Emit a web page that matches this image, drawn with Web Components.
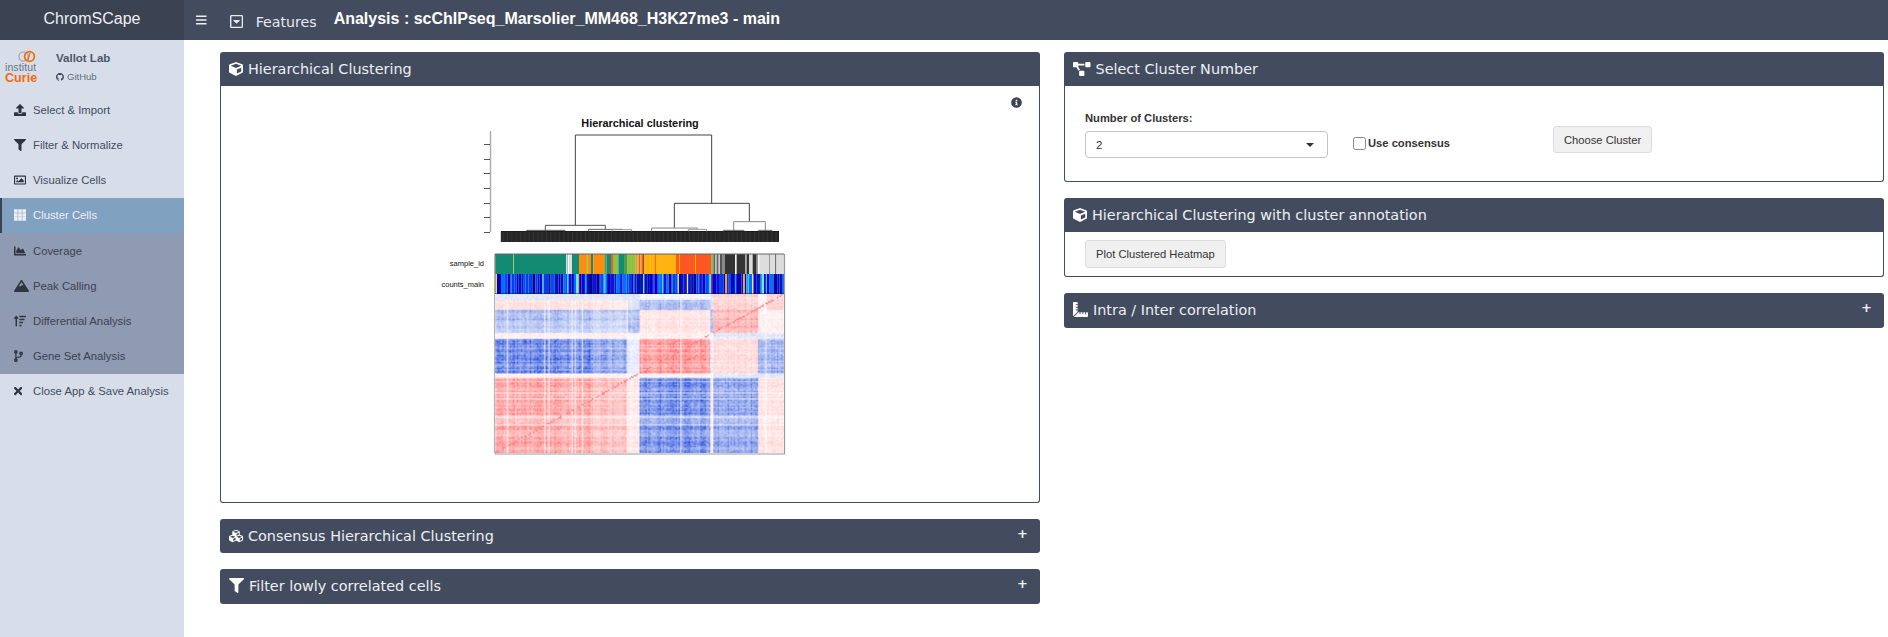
<!DOCTYPE html>
<html lang="en">
<head>
<meta charset="utf-8">
<title>ChromSCape</title>
<style>
  html, body { margin: 0; height: 100%; overflow: hidden; background: #fff; }
  body { font-family: "Liberation Sans", Arial, sans-serif; }
</style>
</head>
<body>
<chrom-app></chrom-app>
<script>
const ICONS = {
  cube: ["0 0 512 512", "M239.1 6.3l-208 78c-18.7 7-31.1 25-31.1 45v225.1c0 18.2 10.3 34.8 26.5 42.9l208 104c13.5 6.8 29.4 6.8 42.9 0l208-104c16.3-8.1 26.5-24.8 26.5-42.9V129.3c0-20-12.4-37.9-31.1-44.9l-208-78C262 2.2 250 2.2 239.1 6.3zM256 68.4l192 72v1.1l-192 78-192-78v-1.1l192-72zm32 356V275.5l160-65v133.9l-160 80z"],
  filter: ["0 0 512 512", "M487.976 0H24.028C2.71 0-8.047 25.866 7.058 40.971L192 225.941V432c0 7.831 3.821 15.17 10.237 19.662l80 55.98C298.02 518.69 320 507.493 320 487.98V225.941l184.947-184.97C520.021 25.896 509.338 0 487.976 0z"],
  upload: ["0 0 512 512", "M296 384h-80c-13.3 0-24-10.7-24-24V192h-87.7c-17.8 0-26.7-21.5-14.1-34.1L242.3 5.7c7.5-7.5 19.8-7.5 27.3 0l152.2 152.2c12.6 12.6 3.7 34.1-14.1 34.1H320v168c0 13.3-10.7 24-24 24zm216-8v112c0 13.3-10.7 24-24 24H24c-13.3 0-24-10.7-24-24V376c0-13.3 10.7-24 24-24h136v8c0 30.9 25.1 56 56 56h80c30.9 0 56-25.1 56-56v-8h136c13.3 0 24 10.7 24 24z"],
  image: ["0 0 512 512", "M464 64H48C21.49 64 0 85.49 0 112v288c0 26.51 21.49 48 48 48h416c26.51 0 48-21.49 48-48V112c0-26.51-21.49-48-48-48zm-6 336H54a6 6 0 0 1-6-6V118a6 6 0 0 1 6-6h404a6 6 0 0 1 6 6v276a6 6 0 0 1-6 6zM128 152c-22.091 0-40 17.909-40 40s17.909 40 40 40 40-17.909 40-40-17.909-40-40-40zM96 352h320v-80l-87.515-87.515c-4.686-4.686-12.284-4.686-16.971 0L192 304l-39.515-39.515c-4.686-4.686-12.284-4.686-16.971 0L96 304v48z"],
  th: ["0 0 512 512", "M0 10h155v155H0zM178 10h155v155H178zM356 10h156v155H356zM0 178h155v155H0zM178 178h155v155H178zM356 178h156v155H356zM0 346h155v156H0zM178 346h155v156H178zM356 346h156v156H356z"],
  area: ["0 0 512 512", "M500 384c6.6 0 12 5.4 12 12v40c0 6.6-5.4 12-12 12H12c-6.6 0-12-5.4-12-12V76c0-6.6 5.4-12 12-12h40c6.6 0 12 5.4 12 12v308h436zM372.7 159.5L288 216l-85.3-113.7c-5.1-6.8-15.5-6.3-19.9 1L96 248v104h384l-89.9-187.8c-3.2-6.5-11.4-8.7-17.4-4.7z"],
  mountain: ["0 0 640 512", "M634.92 462.7l-288-448C341.03 5.54 330.89 0 320 0s-21.03 5.54-26.92 14.7l-288 448a32.001 32.001 0 0 0-1.17 32.64A32.004 32.004 0 0 0 32 512h576c11.71 0 22.48-6.39 28.09-16.67a31.983 31.983 0 0 0-1.17-32.63zM320 91.18L405.39 224H320l-64 64-38.06-38.06L320 91.18z"],
  sort: ["0 0 512 512", "M304 416h-64a16 16 0 0 0-16 16v32a16 16 0 0 0 16 16h64a16 16 0 0 0 16-16v-32a16 16 0 0 0-16-16zM16 160h48v304a16 16 0 0 0 16 16h32a16 16 0 0 0 16-16V160h48c14.21 0 21.38-17.24 11.31-27.31l-80-96a16 16 0 0 0-22.62 0l-80 96C-5.35 142.74 1.77 160 16 160zm416 0H240a16 16 0 0 0-16 16v32a16 16 0 0 0 16 16h192a16 16 0 0 0 16-16v-32a16 16 0 0 0-16-16zm-64 128H240a16 16 0 0 0-16 16v32a16 16 0 0 0 16 16h128a16 16 0 0 0 16-16v-32a16 16 0 0 0-16-16zM496 32H240a16 16 0 0 0-16 16v32a16 16 0 0 0 16 16h256a16 16 0 0 0 16-16V48a16 16 0 0 0-16-16z"],
  branch: ["0 0 384 512", "M384 144c0-44.2-35.8-80-80-80s-80 35.8-80 80c0 36.4 24.3 67.1 57.5 76.8-.6 16.1-4.2 28.5-11 36.9-15.4 19.2-49.3 22.4-85.2 25.7-28.2 2.6-57.4 5.4-81.3 16.9v-144c32.5-10.2 56-40.5 56-76.3 0-44.2-35.8-80-80-80S0 35.8 0 80c0 35.8 23.5 66.1 56 76.3v199.3C23.5 365.9 0 396.2 0 432c0 44.2 35.8 80 80 80s80-35.8 80-80c0-34-21.2-63.1-51.2-74.6 3.1-5.2 7.8-9.8 14.9-13.4 16.2-8.2 40.4-10.4 66.1-12.8 42.2-3.9 90-8.4 118.2-43.4 14-17.4 21.1-39.8 21.6-67.9 31.6-10.8 54.4-40.7 54.4-75.9zM80 64c8.8 0 16 7.2 16 16s-7.2 16-16 16-16-7.2-16-16 7.2-16 16-16zm0 384c-8.8 0-16-7.2-16-16s7.2-16 16-16 16 7.2 16 16-7.2 16-16 16zm224-320c8.8 0 16 7.2 16 16s-7.2 16-16 16-16-7.2-16-16 7.2-16 16-16z"],
  times: ["0 0 352 512", "M242.72 256l100.07-100.07c12.28-12.28 12.28-32.19 0-44.48l-22.24-22.24c-12.28-12.28-32.19-12.28-44.48 0L176 189.28 75.93 89.21c-12.28-12.28-32.19-12.28-44.48 0L9.21 111.45c-12.28 12.28-12.28 32.19 0 44.48L109.28 256 9.21 356.07c-12.28 12.28-12.28 32.19 0 44.48l22.24 22.24c12.28 12.28 32.2 12.28 44.48 0L176 322.72l100.07 100.07c12.28 12.28 32.2 12.28 44.48 0l22.24-22.24c12.28-12.28 12.28-32.19 0-44.48L242.72 256z"],
  github: ["0 0 16 16", "M8 0C3.58 0 0 3.58 0 8c0 3.54 2.29 6.53 5.47 7.59.4.07.55-.17.55-.38 0-.19-.01-.82-.01-1.49-2.01.37-2.53-.49-2.69-.94-.09-.23-.48-.94-.82-1.13-.28-.15-.68-.52-.01-.53.63-.01 1.08.58 1.23.82.72 1.21 1.87.87 2.33.66.07-.52.28-.87.51-1.07-1.78-.2-3.64-.89-3.64-3.95 0-.87.31-1.59.82-2.15-.08-.2-.36-1.02.08-2.12 0 0 .67-.21 2.2.82.64-.18 1.32-.27 2-.27.68 0 1.36.09 2 .27 1.53-1.04 2.2-.82 2.2-.82.44 1.1.16 1.92.08 2.12.51.56.82 1.27.82 2.15 0 3.07-1.87 3.75-3.65 3.95.29.25.54.73.54 1.48 0 1.07-.01 1.93-.01 2.2 0 .21.15.46.55.38A8.013 8.013 0 0 0 16 8c0-4.42-3.58-8-8-8z"],
  diagram: ["0 0 640 512", "M384 320H256c-17.67 0-32 14.33-32 32v128c0 17.67 14.33 32 32 32h128c17.67 0 32-14.33 32-32V352c0-17.67-14.33-32-32-32zM192 32c0-17.67-14.33-32-32-32H32C14.33 0 0 14.33 0 32v128c0 17.67 14.33 32 32 32h95.72l73.16 128.04C211.98 300.98 232.4 288 256 288h.28L192 175.51V128h224V64H192V32zM608 0H480c-17.67 0-32 14.33-32 32v128c0 17.67 14.33 32 32 32h128c17.67 0 32-14.33 32-32V32c0-17.67-14.33-32-32-32z"],
  ruler: ["0 0 512 512", "M160 288h-56c-4.42 0-8-3.58-8-8v-16c0-4.42 3.58-8 8-8h56v-64h-56c-4.42 0-8-3.58-8-8v-16c0-4.42 3.58-8 8-8h56V96h-56c-4.42 0-8-3.58-8-8V72c0-4.42 3.58-8 8-8h56V32c0-17.67-14.33-32-32-32H32C14.33 0 0 14.33 0 32v448c0 2.77.91 5.24 1.57 7.8L160 329.38V288zm320 64h-32v56c0 4.42-3.58 8-8 8h-16c-4.42 0-8-3.58-8-8v-56h-64v56c0 4.42-3.58 8-8 8h-16c-4.42 0-8-3.58-8-8v-56h-64v56c0 4.42-3.58 8-8 8h-16c-4.42 0-8-3.58-8-8v-56h-41.37L24.2 510.43c2.56.66 5.04 1.57 7.8 1.57h448c17.67 0 32-14.33 32-32v-96c0-17.67-14.33-32-32-32z"],
  cubes: ["0 0 512 512", "M488.6 250.2L392 214V105.5c0-15-9.3-28.4-23.4-33.7l-100-37.5c-8.1-3.1-17.1-3.1-25.3 0l-100 37.5c-14.1 5.3-23.4 18.7-23.4 33.7V214l-96.6 36.2C9.3 255.5 0 268.9 0 283.9V394c0 13.6 7.7 26.1 19.9 32.2l100 50c10.1 5.1 22.1 5.1 32.2 0l103.9-52 103.9 52c10.1 5.1 22.1 5.1 32.2 0l100-50c12.2-6.1 19.9-18.6 19.9-32.2V283.9c0-15-9.3-28.4-23.4-33.7zM358 214.8l-85 31.9v-68.2l85-37v73.3zM154 104.1l102-38.2 102 38.2v.6l-102 41.4-102-41.4v-.6zm84 291.1l-85 42.5v-79.1l85-38.8v75.4zm0-112l-102 41.4-102-41.4v-.6l102-38.2 102 38.2v.6zm240 112l-85 42.5v-79.1l85-38.8v75.4zm0-112l-102 41.4-102-41.4v-.6l102-38.2 102 38.2v.6z"],
  info: ["0 0 512 512", "M256 8a248 248 0 1 0 0 496 248 248 0 0 0 0-496zm0 110a42 42 0 1 1 0 84 42 42 0 0 1 0-84zm56 254c0 7-5 12-12 12h-88c-7 0-12-5-12-12v-24c0-7 5-12 12-12h12v-64h-12c-7 0-12-5-12-12v-24c0-7 5-12 12-12h64c7 0 12 5 12 12v100h12c7 0 12 5 12 12z"],
  caret: ["0 0 448 512", "M125 208h198c11 0 16 13 9 20l-99 99c-5 5-12 5-17 0l-99-99c-8-7-3-20 8-20zM448 80v352c0 26-22 48-48 48H48c-26 0-48-22-48-48V80c0-26 22-48 48-48h352c26 0 48 22 48 48zm-48 346V86c0-3-3-6-6-6H54c-3 0-6 3-6 6v340c0 3 3 6 6 6h340c3 0 6-3 6-6z"],
  bars: ["0 0 448 512", "M16 132h416c9 0 16-7 16-16V76c0-9-7-16-16-16H16C7 60 0 67 0 76v40c0 9 7 16 16 16zm0 160h416c9 0 16-7 16-16v-40c0-9-7-16-16-16H16c-9 0-16 7-16 16v40c0 9 7 16 16 16zm0 160h416c9 0 16-7 16-16v-40c0-9-7-16-16-16H16c-9 0-16 7-16 16v40c0 9 7 16 16 16z"]
};

class AppIcon extends HTMLElement {
  connectedCallback() {
    const [box, d] = ICONS[this.getAttribute("name")];
    const h = this.getAttribute("h") || 12;
    const [, , vw, vh] = box.split(" ").map(Number);
    this.attachShadow({ mode: "open" }).innerHTML = `
      <style>:host { display: inline-flex; line-height: 0; } svg { display: block; fill: currentColor; }</style>
      <svg viewBox="${box}" height="${h}" width="${h * vw / vh}"><path fill-rule="evenodd" d="${d}"/></svg>`;
  }
}
customElements.define("app-icon", AppIcon);

class TopBar extends HTMLElement {
  constructor() {
    super();
    this.attachShadow({ mode: "open" }).innerHTML = `
    <style>
      :host { display: flex; height: 40px; background: #434c5e; color: #fff; align-items: center; }
      .brand { width: 184px; height: 100%; background: #3b4252; display: flex; align-items: center; justify-content: center;
        font: 16px "Liberation Sans", Arial, sans-serif; color: #eceff4; padding-bottom: 2px; box-sizing: border-box; }
      .menu { margin-left: 12px; color: #eceff4; }
      .features { margin-left: 23px; display: flex; align-items: center; gap: 13px; padding-top: 3px;
        font: 14.2px "DejaVu Sans", sans-serif; color: #e5e9f0; }
      h1 { margin: 0 0 2px 17px; font: bold 16px "Liberation Sans", Arial, sans-serif; color: #fff; }
    </style>
    <div class="brand">ChromSCape</div>
    <app-icon class="menu" name="bars" h="12"></app-icon>
    <div class="features"><app-icon name="caret" h="15"></app-icon><span>Features</span></div>
    <h1>Analysis : scChIPseq_Marsolier_MM468_H3K27me3 - main</h1>`;
  }
}
customElements.define("top-bar", TopBar);

class NavItem extends HTMLElement {
  constructor() {
    super();
    const icon = this.getAttribute("icon");
    const h = this.getAttribute("h") || 12;
    this.attachShadow({ mode: "open" }).innerHTML = `
    <style>
      :host { display: flex; height: 35.2px; align-items: center; box-sizing: border-box; padding-left: 14px;
        font: 11.3px "Liberation Sans", Arial, sans-serif; color: #434c5e; border-left: 0 solid #3b4252; }
      :host([active]) { background: #81a1c1; color: #eceff4; border-left-width: 2px; padding-left: 12px; padding-bottom: 1px; }
      :host([muted]) { background: #8f9bb3; color: #3b4252; }
      .ic { width: 19px; display: flex; color: #2e3440; }
      :host([active]) .ic { color: #eceff4; }
    </style>
    <span class="ic"><app-icon name="${icon}" h="${h}"></app-icon></span><span><slot></slot></span>`;
  }
}
customElements.define("nav-item", NavItem);

class SideNav extends HTMLElement {
  constructor() {
    super();
    this.attachShadow({ mode: "open" }).innerHTML = `
    <style>
      :host { display: block; width: 184px; background: #d8dee9; flex: none; }
      .lab { height: 52.4px; display: flex; font-family: "Liberation Sans", Arial, sans-serif; box-sizing: border-box; padding: 10px 0 0 5px; }
      .logo { width: 51px; }
      .logo svg { display: block; margin-left: 12px; }
      .logo div { line-height: 10px; }
      .inst { font-size: 10.5px; color: #6b7280; margin-top: -1px; letter-spacing: .1px; }
      .curie { font-size: 12.6px; font-weight: bold; color: #f56a0a; margin-top: 1px; }
      .name { font-size: 11.5px; font-weight: bold; color: #4c566a; margin-top: 2px; }
      .gh { display: flex; align-items: center; gap: 3px; font-size: 9.5px; color: #5e6b80; margin-top: 7px; }
      .gh app-icon { color: #3b4252; }
    </style>
    <div class="lab">
      <div class="logo">
        <svg width="24" height="13" viewBox="0 0 24 13">
          <circle cx="6.5" cy="6.5" r="4.6" fill="none" stroke="#a9a9a9" stroke-width="1.4"/>
          <circle cx="12.5" cy="6.5" r="4.9" fill="none" stroke="#f56a0a" stroke-width="1.8"/>
          <path d="M11 10l2-7" stroke="#f56a0a" stroke-width="1.2"/>
        </svg>
        <div class="inst">institut</div>
        <div class="curie">Curie</div>
      </div>
      <div>
        <div class="name">Vallot Lab</div>
        <div class="gh"><app-icon name="github" h="8"></app-icon>GitHub</div>
      </div>
    </div>
    <slot></slot>`;
  }
}
customElements.define("side-nav", SideNav);

class BoxPanel extends HTMLElement {
  constructor() {
    super();
    const collapsed = this.hasAttribute("collapsed");
    this.attachShadow({ mode: "open" }).innerHTML = `
    <style>
      :host { display: block; border-radius: 3px; background: #fff; }
      header { height: 34px; background: #434c5e; border-radius: 3px 3px 0 0; color: #eceff4; display: flex; align-items: center;
        box-sizing: border-box; padding: 0 9px; gap: 5px; font: 14.4px "DejaVu Sans", sans-serif; }
      :host([collapsed]) header { border-radius: 3px; }
      :host([tall]) header { height: 35px; padding-bottom: 2px; }
      h2 { font: inherit; margin: 0; flex: 1; }
      .plus { font: bold 13px "DejaVu Sans", sans-serif; margin-right: 3px; margin-top: -5px; }
      .body { border: 1px solid #434c5e; border-top: 0; border-radius: 0 0 3px 3px; }
      ::slotted([slot=icon]) { color: #fff; }
    </style>
    <header><slot name="icon"></slot><h2>${this.getAttribute("heading")}</h2>${collapsed ? '<span class="plus">+</span>' : ""}</header>
    ${collapsed ? "" : '<div class="body"><slot></slot></div>'}`;
  }
}
customElements.define("box-panel", BoxPanel);

// seeded so that the picture is the same on every run
function rng(seed) {
  return () => (seed = (seed * 16807) % 2147483647) / 2147483647;
}

const SAMPLE_STRIP = [
  [46,100,"#138a72"],[100,102,"#8bc34a"],[102,258,"#138a72"],[258,261,"#ddd"],[261,263,"#138a72"],[263,266,"#fff"],[266,276,"#ddd"],[276,297,"#138a72"],
  [297,318,"#ff8c0a"],[318,322,"#8bc34a"],[322,333,"#ff8c0a"],[333,340,"#138a72"],[340,373,"#ff8c0a"],[373,380,"#4f9a50"],[380,393,"#138a72"],[393,399,"#ff5722"],
  [399,415,"#8bc34a"],[415,432,"#138a72"],[432,441,"#4f9a50"],[441,466,"#8bc34a"],[466,472,"#ff8c0a"],[472,476,"#8bc34a"],[476,480,"#ff5722"],[480,484,"#ffb30f"],[484,490,"#ff5722"],[490,492,"#222"],
  [492,525,"#ffb30f"],[525,528,"#ff6a1a"],[528,588,"#ffb30f"],[588,597,"#ff5722"],[597,600,"#ffb30f"],[600,645,"#ff5722"],[645,648,"#ffb30f"],[648,693,"#ff5722"],[693,700,"#8bc34a"],
  [700,706,"#666"],[706,710,"#bbb"],[710,716,"#666"],[716,720,"#ccc"],[720,728,"#555"],[728,735,"#888"],[735,765,"#333"],[765,770,"#eee"],[770,795,"#333"],[795,800,"#aaa"],[800,808,"#333"],[808,818,"#ddd"],[818,830,"#333"],[830,835,"#999"],
  [835,838,"#fff"],[838,867,"#ddd"],[867,869,"#333"],[869,886,"#ddd"],[886,889,"#333"],[889,912,"#ddd"]
];

class ClusterPlot extends HTMLElement {
  constructor() {
    super();
    const r = rng(4242);
    // strips, x in zoom units of the reference
    const sx = z => 480 + z / 3;
    let rects = SAMPLE_STRIP.map(([a, b, c]) =>
      `<rect x="${sx(a)}" y="254" width="${(b - a) / 3}" height="20" fill="${c}"/>`).join("");
    const blues = ["#0000c8","#0000e0","#0a14d8","#0050f0","#0018b0","#0070ff","#0000a0","#0000c8","#0040e8"];
    const hot = ["#2ad4ff","#ffe14a","#5cf2e6","#19a0ff","#2ad4ff","#ff9a1a"];
    let x = 495;
    while (x < 784) {
      const hit = r() < 0.16;
      const w = hit ? 0.8 + r() * 1.2 : 1 + r() * 3;
      const c = hit ? hot[Math.floor(r() * hot.length)] : blues[Math.floor(r() * blues.length)];
      rects += `<rect x="${x}" y="274" width="${w}" height="20" fill="${c}"/>`;
      x += w;
    }
    // branches from the dendrogram, in zoom units as well
    const dx = z => 420 + z / 3, dy = z => 100 + z / 3;
    const branch = (a, b, top, la, lb, col) =>
      `<path fill="none" stroke="${col}" d="M${dx(a)} ${dy(la)}V${dy(top)}H${dx(b)}V${dy(lb)}"/>`;
    const tree = [
      branch(466, 875, 105, 376, 310, "#444"),
      branch(376, 556, 376, 394, 388, "#555"),
      branch(763, 988, 310, 384, 365, "#444"),
      branch(505, 607, 388, 394, 390, "#666"),
      branch(577, 635, 389, 394, 394, "#999"),
      branch(320, 435, 391, 394, 394, "#555"),
      branch(695, 832, 384, 394, 388, "#888"),
      branch(805, 860, 388, 394, 394, "#999"),
      branch(941, 1036, 365, 392, 392, "#888"),
      branch(910, 972, 391, 394, 394, "#666"),
      branch(1015, 1056, 391, 394, 394, "#666")
    ].join("");
    const ticks = [144, 159, 173, 188, 203, 217, 232].map(y =>
      `<path d="M484 ${y + .5}H490" stroke="#555"/>`).join("");
    // comb of leaves under the tree
    let comb = "";
    for (let lx = 501; lx < 779; lx += 1.3) comb += `<path d="M${lx} 231.5V242" stroke="#555" stroke-width=".5"/>`;

    this.attachShadow({ mode: "open" }).innerHTML = `
    <style>
      :host { display: block; height: 416px; position: relative; }
      svg { display: block; }
      text { font-family: "Liberation Sans", Arial, sans-serif; fill: #111; }
      canvas { position: absolute; left: 274px; top: 208px; width: 289px; height: 159px; }
      .info { position: absolute; right: 17px; top: 11px; color: #3b4252; }
    </style>
    <svg width="818" height="416" viewBox="221 86 818 416">
      <text x="640" y="127" text-anchor="middle" font-size="10.9" font-weight="bold">Hierarchical clustering</text>
      <path d="M490.5 131V232" stroke="#aaa" stroke-width="1.4"/>${ticks}
      <rect x="501" y="231" width="278" height="11" fill="#101010"/>${comb}
      ${tree}
      <text x="484" y="266" text-anchor="end" font-size="7.5" fill="#333">sample_id</text>
      <text x="484" y="287" text-anchor="end" font-size="7.5" fill="#333">counts_main</text>
      ${rects}
      <path d="M495 254H784M495 254V453.5" fill="none" stroke="#666"/>
      <path d="M784.5 254V454H495" fill="none" stroke="#999" stroke-width="1.2"/>
      <path d="M495 294H784" stroke="#111"/>
    </svg>
    <canvas width="289" height="159"></canvas>
    <app-icon class="info" name="info" h="11"></app-icon>`;
    this.paint(this.shadowRoot.querySelector("canvas"));
  }

  paint(canvas) {
    const W = 289, H = 159;
    const r = rng(917);
    const cols = 200, rows = 110;
    const zx = n => (n - 46) / 866;
    const zy = n => (n - 132) / 478;
    const xb = [[zx(445),"A"],[zx(480),"g"],[zx(690),"B"],[zx(700),"g"],[zx(835),"C"],[1.01,"D"]];
    const yb = [[zy(180),"D"],[zy(250),"C"],[zy(265),"g"],[zy(370),"B"],[zy(385),"g"],[1.01,"A"]];
    // mean value per pair of clusters, + is red and - is blue
    const M = {
      D: { A: .14, B: -.36, C: .22, D: .2, g: -.14 },
      C: { A: -.42, B: .14, C: .38, D: .08, g: -.35 },
      B: { A: -.66, B: .48, C: .18, D: -.42, g: -.1 },
      A: { A: .42, B: -.62, C: -.52, D: .14, g: .1 },
      g: { A: .08, B: .08, C: -.14, D: -.14, g: -.04 }
    };
    const pick = (bands, t) => bands.find(b => t < b[0])[1];
    const colF = Array.from({ length: cols }, () => 0.78 + r() * 0.4);
    const rowF = Array.from({ length: rows }, () => 0.72 + r() * 0.5);
    // a few nearly white lines, as in the reference
    for (let i = 0; i < 9; i++) colF[Math.floor(r() * cols)] = 0.4;
    for (let i = 0; i < 5; i++) rowF[Math.floor(r() * rows)] = 0.45;
    const small = document.createElement("canvas");
    small.width = cols; small.height = rows;
    const sc = small.getContext("2d");
    const img = sc.createImageData(cols, rows);
    for (let j = 0; j < rows; j++) {
      const ty = (j + .5) / rows, yc = pick(yb, ty);
      for (let i = 0; i < cols; i++) {
        const tx = (i + .5) / cols, xc = pick(xb, tx);
        let v = M[yc][xc] * colF[i] * rowF[j] * (1 + (r() - .5) * .45) + (r() - .5) * .1;
        // the big blocks get paler towards their right side and their lower rows
        if (xc === "A" && yc !== "g" && tx > .34) v *= .72;
        if (yc === "C" && xc === "A" && ty > zy(215)) v *= .72;
        if (yc === "D" && xc === "A" && ty < zy(150)) v = -.14 + (r() - .5) * .1;
        if (yc === "D" && xc === "B" && ty < zy(150)) v = -.06 + (r() - .5) * .1;
        if (yc === "D" && xc === "D" && tx < zx(860)) v = .05 + (r() - .5) * .1;
        if (Math.abs((1 - ty) - tx) < .005 && r() < .55) v = .65;
        const a = Math.min(1, Math.abs(v));
        const c = v > 0 ? [255, 60, 60] : [45, 85, 220];
        const k = (j * cols + i) * 4;
        img.data[k] = 255 + (c[0] - 255) * a;
        img.data[k + 1] = 255 + (c[1] - 255) * a;
        img.data[k + 2] = 255 + (c[2] - 255) * a;
        img.data[k + 3] = 255;
      }
    }
    sc.putImageData(img, 0, 0);
    const ctx = canvas.getContext("2d");
    ctx.imageSmoothingEnabled = true;
    ctx.drawImage(small, 0, 0, W, H);
  }
}
customElements.define("cluster-plot", ClusterPlot);

class ClusterForm extends HTMLElement {
  constructor() {
    super();
    this.attachShadow({ mode: "open" }).innerHTML = `
    <style>
      :host { display: grid; grid-template-columns: 243px 200px 1fr; height: 95px; box-sizing: border-box;
        padding: 25px 20px 0; font: 11.5px "Liberation Sans", Arial, sans-serif; color: #333; }
      label.title { display: block; font-weight: bold; font-size: 11.2px; margin-bottom: 6px; line-height: 14px; }
      .select { height: 27px; box-sizing: border-box; border: 1px solid #c4c4c4; border-radius: 4px; display: flex; align-items: center;
        justify-content: space-between; padding: 0 10px; }
      .select i { width: 0; height: 0; border: 4.5px solid transparent; border-top: 4.5px solid #333; border-bottom: 0; margin-right: 3px; }
      .check { display: flex; align-items: center; height: 27px; margin: 18px 0 0 25px; font-weight: bold; font-size: 11.2px; gap: 2px; }
      .check i { width: 11px; height: 11px; border: 1px solid #888; border-radius: 2.5px; background: #fff; display: block; margin-top: 2px; }
      push-button { justify-self: start; margin: 15px 0 0 25px; }
    </style>
    <div>
      <label class="title">Number of Clusters:</label>
      <div class="select"><span>2</span><i></i></div>
    </div>
    <div class="check"><i></i><span>Use consensus</span></div>
    <push-button>Choose Cluster</push-button>`;
  }
}
customElements.define("cluster-form", ClusterForm);

class PushButton extends HTMLElement {
  constructor() {
    super();
    this.attachShadow({ mode: "open" }).innerHTML = `
    <style>
      :host { display: inline-flex; height: 27px; align-items: center; box-sizing: border-box; padding: 0 10px; background: #f0f0f0;
        border: 1px solid #ddd; border-radius: 3px; font: 11.2px "Liberation Sans", Arial, sans-serif; color: #333; }
    </style><slot></slot>`;
  }
}
customElements.define("push-button", PushButton);

class ChromApp extends HTMLElement {
  constructor() {
    super();
    this.attachShadow({ mode: "open" }).innerHTML = `
    <style>
      :host { display: flex; flex-direction: column; height: 637px; overflow: hidden; }
      .row { flex: 1; display: flex; min-height: 0; }
      main { flex: 1; display: grid; grid-template-columns: 820px 820px; column-gap: 24px; padding: 12px 0 0 36px; align-items: start; }
      .col { display: flex; flex-direction: column; gap: 16px; }
      .plot-btn { padding: 8px 20px 8px; height: 44px; box-sizing: border-box; }
      .plot-btn push-button { height: 28px; }
    </style>
    <top-bar></top-bar>
    <div class="row">
      <side-nav>
        <nav-item icon="upload">Select &amp; Import</nav-item>
        <nav-item icon="filter">Filter &amp; Normalize</nav-item>
        <nav-item icon="image">Visualize Cells</nav-item>
        <nav-item icon="th" active>Cluster Cells</nav-item>
        <nav-item icon="area" muted>Coverage</nav-item>
        <nav-item icon="mountain" muted>Peak Calling</nav-item>
        <nav-item icon="sort" muted>Differential Analysis</nav-item>
        <nav-item icon="branch" muted>Gene Set Analysis</nav-item>
        <nav-item icon="times">Close App &amp; Save Analysis</nav-item>
      </side-nav>
      <main>
        <div class="col">
          <box-panel heading="Hierarchical Clustering"><app-icon slot="icon" name="cube" h="14"></app-icon><cluster-plot></cluster-plot></box-panel>
          <box-panel heading="Consensus Hierarchical Clustering" collapsed><app-icon slot="icon" name="cubes" h="14"></app-icon></box-panel>
          <box-panel heading="Filter lowly correlated cells" collapsed tall><app-icon slot="icon" name="filter" h="15"></app-icon></box-panel>
        </div>
        <div class="col">
          <box-panel heading="Select Cluster Number"><app-icon slot="icon" name="diagram" h="14"></app-icon><cluster-form></cluster-form></box-panel>
          <box-panel heading="Hierarchical Clustering with cluster annotation"><app-icon slot="icon" name="cube" h="14"></app-icon><div class="plot-btn"><push-button>Plot Clustered Heatmap</push-button></div></box-panel>
          <box-panel heading="Intra / Inter correlation" collapsed tall><app-icon slot="icon" name="ruler" h="15"></app-icon></box-panel>
        </div>
      </main>
    </div>`;
  }
}
customElements.define("chrom-app", ChromApp);
</script>
</body>
</html>
